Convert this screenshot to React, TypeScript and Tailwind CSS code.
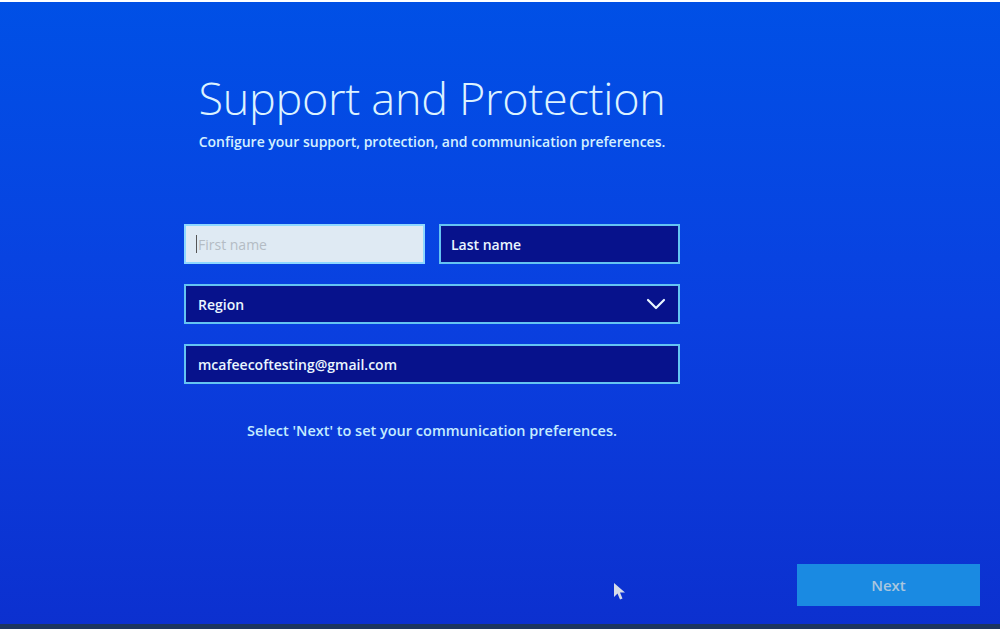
import React from "react";

export default function App() {
  const font = { fontFamily: '"Open Sans", "Noto Sans", sans-serif' } as React.CSSProperties;
  return (
    <div
      className="relative w-[1000px] h-[629px] overflow-hidden flex flex-col bg-gradient-to-b from-[#0050e6] via-[#0a40e0] to-[#0c30cf]"
      style={font}
    >
      <div className="h-[2px] bg-white shrink-0" />
      <div className="ml-[184px] w-[496px] pt-[68px] flex flex-col">
        <h1 className="text-center text-[45px] leading-[56px] font-light text-[#dcf2ff] tracking-[-0.3px]">
          Support and Protection
        </h1>
        <p className="text-center text-[14px] leading-[18px] font-semibold text-[#d4f0ff] mt-[7px]">
          Configure your support, protection, and communication preferences.
        </p>
        <div className="grid grid-cols-2 gap-[14px] mt-[73px]">
          <div className="h-[40px] border-2 border-[#8ed8ff] bg-[#dfeaf3] flex items-center pl-[10px]">
            <span className="w-px h-[18px] bg-[#555] mr-px" />
            <span className="text-[14px] text-[#b4bcc4]">First name</span>
          </div>
          <div className="h-[40px] border-2 border-[#64c4f2] bg-[#07128c] flex items-center pl-[10px]">
            <span className="text-[14px] font-semibold text-[#eaf6ff]">Last name</span>
          </div>
        </div>
        <div className="mt-[20px] h-[40px] border-2 border-[#64c4f2] bg-[#07128c] flex items-center justify-between pl-[12px] pr-[12px]">
          <span className="text-[14px] font-semibold text-[#eaf6ff]">Region</span>
          <svg width="20" height="12" viewBox="0 0 20 12" fill="none">
            <path d="M2 2 L10 10 L18 2" stroke="#eaf6ff" strokeWidth="2.2" strokeLinecap="round" strokeLinejoin="round" />
          </svg>
        </div>
        <div className="mt-[20px] h-[40px] border-2 border-[#64c4f2] bg-[#07128c] flex items-center pl-[12px]">
          <span className="text-[14px] font-semibold text-[#eaf6ff]">mcafeecoftesting@gmail.com</span>
        </div>
        <p className="text-center text-[14.5px] font-semibold text-[#c4ecff] mt-[36px]">
          Select 'Next' to set your communication preferences.
        </p>
      </div>
      <div className="flex-1" />
      <div className="flex justify-end pr-[20px] pb-[18px]">
        <div className="w-[183px] h-[42px] bg-[#1a8ae2] flex items-center justify-center">
          <span className="text-[15px] font-semibold text-[#a9c6de]">Next</span>
        </div>
      </div>
      <div className="h-[5px] bg-[#1c3560] shrink-0" />
      <svg className="absolute left-[613px] top-[582px]" width="14" height="19" viewBox="0 0 14 19">
        <path d="M1 1 L1 15 L4.5 11.5 L7 17.5 L9.5 16.5 L7 10.5 L12 10.5 Z" fill="#d6dce8" />
      </svg>
    </div>
  );
}
